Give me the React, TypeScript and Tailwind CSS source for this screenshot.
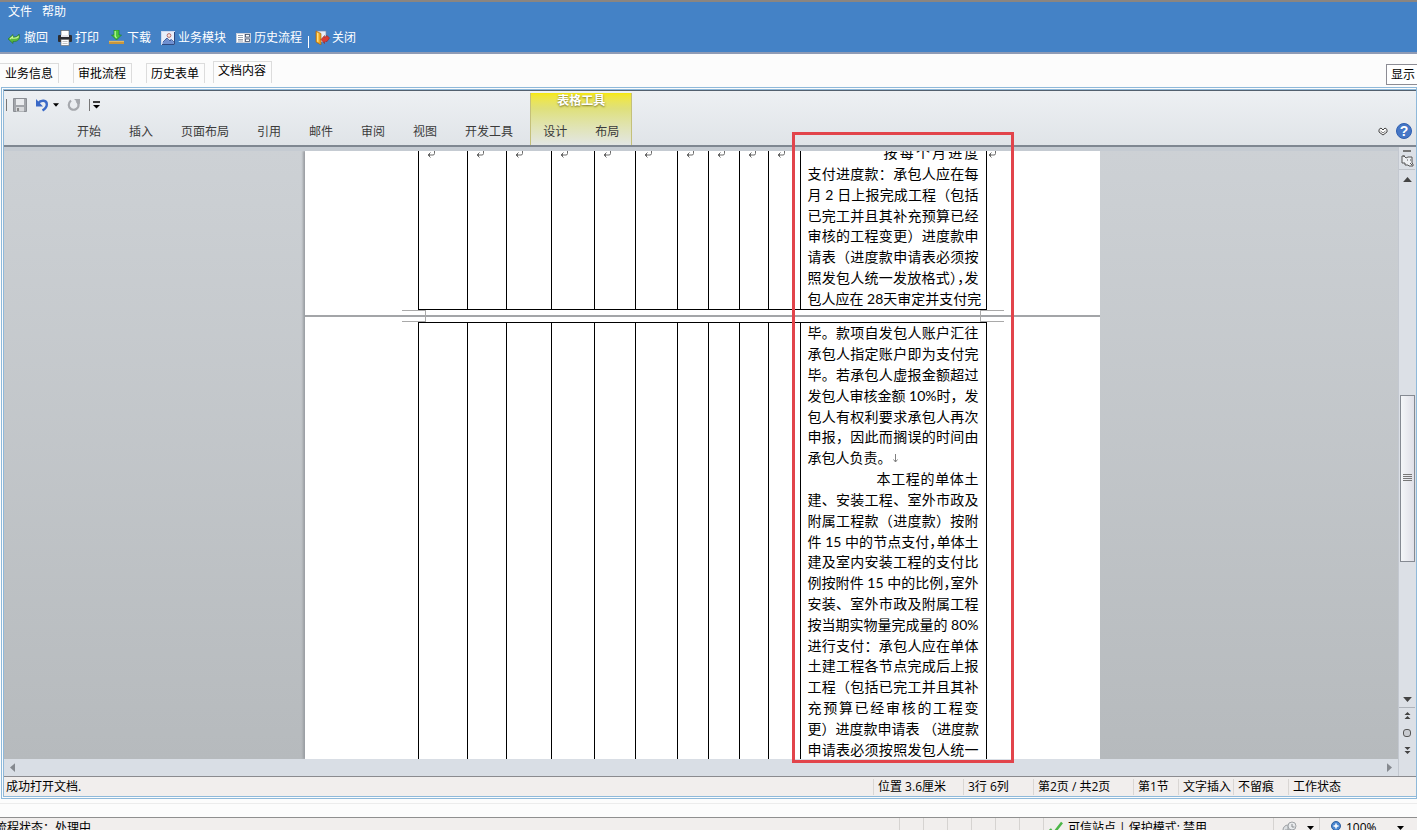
import React from 'react';
import clsx from 'clsx';

const RIBBON_TABS = ['开始', '插入', '页面布局', '引用', '邮件', '审阅', '视图', '开发工具'];
const FORM_TABS = ['业务信息', '审批流程', '历史表单', '文档内容'];

type Line = { text: string; kind?: 'first' | 'second' | 'tight' | 'end' };

const PAGE_ONE: Line[] = [
  { text: '按每个月进度', kind: 'first' },
  { text: '支付进度款：承包人应在每' },
  { text: '月 2 日上报完成工程（包括' },
  { text: '已完工并且其补充预算已经' },
  { text: '审核的工程变更）进度款申' },
  { text: '请表（进度款申请表必须按' },
  { text: '照发包人统一发放格式），发', kind: 'tight' },
  { text: '包人应在 28天审定并支付完' },
];

const PAGE_TWO: Line[] = [
  { text: '毕。款项自发包人账户汇往' },
  { text: '承包人指定账户即为支付完' },
  { text: '毕。若承包人虚报金额超过' },
  { text: '发包人审核金额 10%时，发' },
  { text: '包人有权利要求承包人再次' },
  { text: '申报，因此而搁误的时间由' },
  { text: '承包人负责。', kind: 'end' },
  { text: '本工程的单体土', kind: 'second' },
  { text: '建、安装工程、室外市政及' },
  { text: '附属工程款（进度款）按附' },
  { text: '件 15 中的节点支付，单体土', kind: 'tight' },
  { text: '建及室内安装工程的支付比' },
  { text: '例按附件 15 中的比例，室外', kind: 'tight' },
  { text: '安装、室外市政及附属工程' },
  { text: '按当期实物量完成量的 80%' },
  { text: '进行支付：承包人应在单体' },
  { text: '土建工程各节点完成后上报' },
  { text: '工程（包括已完工并且其补' },
  { text: '充预算已经审核的工程变' },
  { text: '更）进度款申请表 （进度款' },
  { text: '申请表必须按照发包人统一' },
];

const UndoGreen = () => (
  <svg width="14" height="14" viewBox="0 0 14 14">
    <path d="M1 8 6 3.500v2.300c3 .4 5-.8 6-2.800C14 7.500 11 11 6 10.500v2z" fill="#58b83c" stroke="#26702a" strokeWidth=".6" />
    <path d="M3 8 5.500 5.900v1.200c2.500.4 4.500 0 6.200-1.600" fill="none" stroke="#c9f59a" strokeWidth="1.200" />
  </svg>
);

const PrinterIcon = () => (
  <svg width="14" height="16" viewBox="0 0 14 16">
    <rect x="3" y=".5" width="8" height="5" fill="#fff" stroke="#555" strokeWidth=".6" />
    <rect x="0" y="5" width="14" height="7" rx="1" fill="#2c2c30" />
    <rect x="3" y="5" width="8" height="2" fill="#e6e6ea" />
    <rect x="3" y="9.500" width="8" height="6" fill="#fff" stroke="#666" strokeWidth=".6" />
    <path d="M4.500 11.500h5M4.500 13.500h5" stroke="#9a9a9a" strokeWidth=".6" />
  </svg>
);

const DownloadIcon = () => (
  <svg width="15" height="15" viewBox="0 0 15 15">
    <path d="M5 0h5v5h2.500l-5 5-5-5H5z" fill="#4cc63a" stroke="#16781b" strokeWidth=".6" />
    <path d="M6.200 1v5L7.500 8" fill="none" stroke="#b8f59c" strokeWidth="1.300" />
    <rect x="0" y="11" width="15" height="3" fill="#c9963c" />
    <path d="M0 11.300h15" stroke="#f5d58a" strokeWidth=".7" />
  </svg>
);

const ModuleIcon = () => (
  <svg width="14" height="14" viewBox="0 0 14 14">
    <rect x=".5" y=".5" width="13" height="13" fill="#e8effb" stroke="#cfd9ee" />
    <path d="M13.500 1v12.500H1" fill="none" stroke="#2f4a80" />
    <circle cx="8" cy="4.500" r="1.900" fill="#f8e4dc" stroke="#a65252" strokeWidth=".8" />
    <path d="m1.500 11.500 4-4.500 2.500 2.500L9.500 8l3.500 3.500V13H1.500z" fill="#6f8fd0" />
    <path d="m2 11 4-4 3 3 1.500-1.500L13 11" fill="none" stroke="#33528f" strokeWidth=".8" />
  </svg>
);

const HistoryIcon = () => (
  <svg width="15" height="14" viewBox="0 0 15 14">
    <rect x="0" y="2" width="15" height="10" fill="#c8cfdb" />
    <rect x="1" y="3" width="7" height="8" fill="#fff" />
    <path d="M2 4.500h5M2 6.500h5M2 8.500h5M2 10h5" stroke="#7a8699" strokeWidth=".8" />
    <rect x="9.500" y="3.500" width="4" height="2.500" fill="#fff" stroke="#3e4c66" strokeWidth=".8" />
    <rect x="9.500" y="8" width="4" height="2.500" fill="#fff" stroke="#3e4c66" strokeWidth=".8" />
  </svg>
);

const CloseIcon = () => (
  <svg width="15" height="15" viewBox="0 0 15 15">
    <path d="M1 1h10v11H1z" fill="#e9eef8" stroke="#7987a8" strokeWidth=".7" />
    <path d="m1 1 5 2.500V15l-5-3z" fill="#f0a51d" stroke="#9b5c0d" strokeWidth=".6" />
    <path d="m2 2.500 1.500.8v9l-1.500-.8z" fill="#ffe083" />
    <path d="m6 9.500 3.500-4v2L12 5.500 14.500 8 12 11.500H9.500v2z" fill="#dc3b33" stroke="#8f1f1b" strokeWidth=".5" />
  </svg>
);

const TOOLS = [
  { label: '撤回', icon: UndoGreen },
  { label: '打印', icon: PrinterIcon },
  { label: '下载', icon: DownloadIcon },
  { label: '业务模块', icon: ModuleIcon },
  { label: '历史流程', icon: HistoryIcon },
];

const Caret = ({ className }: { className?: string }) => (
  <svg width="7" height="4" viewBox="0 0 7 4" className={className}>
    <path d="M0 0h7L3.500 4z" fill="currentColor" />
  </svg>
);

const ReturnMark = () => (
  <svg width="8" height="7" viewBox="0 0 8 7">
    <path d="M7.500 0v2.500q0 1.500-1.500 1.500H1M3.500 1.500 1 4l2.500 2.500M2.500 3v2" fill="none" stroke="#6b6b6b" />
  </svg>
);

const TextLine = ({ text, kind }: Line) => (
  <p
    className={clsx(
      'flex flex-1 items-center whitespace-nowrap leading-5',
      kind === 'first' && 'pl-[76px]',
      kind === 'second' && 'pl-[69px]',
      kind === 'tight' && "[font-feature-settings:'halt']"
    )}
  >
    <span className={kind === 'end' ? '' : 'w-full [text-align-last:justify]'}>{text}</span>
    {kind === 'end' && (
      <svg width="7" height="9" viewBox="0 0 7 9">
        <path d="M3.500 0v8M1.500 5.500l2 2.500 2-2.500" fill="none" stroke="#808080" />
      </svg>
    )}
  </p>
);

const Columns = () => (
  <colgroup>
    <col className="w-[49px]" />
    <col className="w-[39px]" />
    <col className="w-[45px]" />
    <col className="w-[43px]" />
    <col className="w-[41px]" />
    <col className="w-[42px]" />
    <col className="w-[31px]" />
    <col className="w-[31px]" />
    <col className="w-[29px]" />
    <col className="w-[32px]" />
    <col className="w-[186px]" />
  </colgroup>
);

const EMPTY_CELLS = Array.from({ length: 10 }, (_, i) => i);

const CropMarks = () => (
  <div className="absolute inset-x-0 top-0 flex justify-between pl-[97px] pr-24">
    <span className="h-3 w-6 border-y border-r border-[#a9a9a9]" />
    <span className="h-3 w-6 border-y border-l border-[#a9a9a9]" />
  </div>
);

const DocumentPages = () => (
  <div className="w-[795px] shrink-0 bg-white font-[Lato,'Noto_Sans_CJK_SC',sans-serif] text-[14px] text-black shadow-[-2px_0_2px_#9b9ea3]">
    <div className="flex h-[159px] pl-[113px]">
      <table className="w-[569px] shrink-0 table-fixed border-collapse">
        <Columns />
        <tbody>
          <tr>
            {EMPTY_CELLS.map((i) => (
              <td key={i} className="border border-t-0 border-black p-0 pl-2 align-top">
                <ReturnMark />
              </td>
            ))}
            <td className="border border-t-0 border-black p-0 align-top">
              <div className="flex h-[158px] flex-col justify-end overflow-hidden px-[7px]">
                <div className="flex h-[166px] shrink-0 flex-col">
                  {PAGE_ONE.map((line) => (
                    <TextLine key={line.text} {...line} />
                  ))}
                </div>
              </div>
            </td>
          </tr>
        </tbody>
      </table>
      <div className="pl-px">
        <ReturnMark />
      </div>
    </div>
    <div className="relative flex h-3 items-center">
      <CropMarks />
      <div className="h-[2px] w-full bg-[#a3a5a8]" />
    </div>
    <table className="ml-[113px] w-[569px] table-fixed border-collapse">
      <Columns />
      <tbody>
        <tr>
          {EMPTY_CELLS.map((i) => (
            <td key={i} className="border border-b-0 border-black p-0" />
          ))}
          <td className="border border-b-0 border-black p-0 px-[7px]">
            <div className="flex h-[437px] flex-col">
              {PAGE_TWO.map((line) => (
                <TextLine key={line.text} {...line} />
              ))}
            </div>
          </td>
        </tr>
      </tbody>
    </table>
  </div>
);

const VerticalScrollbar = () => (
  <div className="flex w-[18px] shrink-0 flex-col items-center border-l border-[#c3c8d0] bg-[#dce0e6] pr-px text-[#444]">
    <div className="mt-[3px] h-[2px] w-2 shrink-0 bg-[#777]" />
    <button type="button" aria-label="标尺" className="flex h-[18px] w-full items-center justify-center border-b border-[#c0c4ca]">
      <svg width="13" height="13" viewBox="0 0 13 13">
        <path d="M1 2h2l2 2 2-1h4v6l1 1v2H8l-1-1H4V9H1z" fill="#eef0f3" stroke="#555" />
        <path d="M3 1v2M6 6h1M9 6h1M9 9l2 2" stroke="#555" />
      </svg>
    </button>
    <button type="button" aria-label="向上滚动" className="flex h-[18px] items-center justify-center">
      <Caret className="h-[5px] w-[9px] rotate-180" />
    </button>
    <div className="grow-[208] basis-0" />
    <div className="flex w-[15px] grow-[165] basis-0 items-center justify-center border border-[#858a92] bg-linear-to-r from-[#f4f6f8] to-[#e0e0e8]">
      <svg width="9" height="8" viewBox="0 0 9 8">
        <path d="M0 .5h9M0 2.500h9M0 4.500h9M0 6.500h9" stroke="#777" />
      </svg>
    </div>
    <div className="grow-[131] basis-0" />
    <button type="button" aria-label="向下滚动" className="flex h-4 w-full items-center justify-center border-b border-[#aeb3ba]">
      <Caret className="h-[5px] w-[9px]" />
    </button>
    <div className="flex h-[68px] flex-col items-center gap-[9px] pt-1">
      <button type="button" aria-label="上一页">
        <svg width="7" height="8" viewBox="0 0 7 8" className="block">
          <path d="M3.500 0 6.500 3h-6zM3.500 4 6.500 7h-6z" fill="#444" />
        </svg>
      </button>
      <button type="button" aria-label="选择浏览对象">
        <svg width="8" height="8" viewBox="0 0 8 8" className="block">
          <rect x=".5" y=".5" width="7" height="7" rx="2.500" fill="#c8cbd0" stroke="#555" />
        </svg>
      </button>
      <button type="button" aria-label="下一页">
        <svg width="7" height="8" viewBox="0 0 7 8" className="block">
          <path d="M3.500 4 6.500 1h-6zM3.500 8 6.500 5h-6z" fill="#444" />
        </svg>
      </button>
    </div>
  </div>
);

const Ribbon = () => (
  <div className="flex h-[57px] shrink-0 border-t border-b-2 border-t-[#52606e] border-b-[#7f8791] bg-linear-to-b from-[#edf0f3] to-[#e0e4e8] text-[#3b3b3b]">
    <div className="flex flex-col">
      <div className="flex h-[27px] items-center pl-[2px]">
        <span className="h-3 w-px bg-[#777]" />
        <button type="button" aria-label="保存" className="ml-[6px]">
          <svg width="14" height="14" viewBox="0 0 14 14">
            <path d="M.5.5h13v13H.5z" fill="#a3a6ab" stroke="#8b8e94" />
            <rect x="3" y="1" width="8" height="6" fill="#e9ebee" />
            <rect x="3" y="9" width="8" height="4.500" fill="#d7d9dc" />
            <rect x="4" y="10" width="2" height="3" fill="#888" />
          </svg>
        </button>
        <button type="button" aria-label="撤消" className="ml-2">
          <svg width="14" height="14" viewBox="0 0 14 14">
            <path d="M3 5.500C6 1.500 12 2 11.800 6.500c0 2.500-1.800 4.500-4.300 6" fill="none" stroke="#3a69c7" strokeWidth="2.400" />
            <path d="M1 1v7.500h7z" fill="#3a69c7" />
          </svg>
        </button>
        <Caret className="ml-1 w-[6px] text-black" />
        <button type="button" aria-label="恢复" className="ml-2">
          <svg width="14" height="14" viewBox="0 0 14 14">
            <path d="M4 2.500C1 5 1 9 4 11c3.500 2 8-.5 7.500-4.500C11.300 5 10.500 4 9.500 3" fill="none" stroke="#a5a8ad" strokeWidth="2.200" />
            <path d="M7 1h6v5.500z" fill="#a5a8ad" />
          </svg>
        </button>
        <span className="ml-2 h-3 w-px bg-[#777]" />
        <button type="button" aria-label="自定义快速访问工具栏" className="ml-[3px]">
          <svg width="7" height="8" viewBox="0 0 7 8">
            <path d="M0 1h7" stroke="#000" strokeWidth="1.500" />
            <path d="M0 4h7L3.500 7.500z" fill="#000" />
          </svg>
        </button>
      </div>
      <div className="flex h-[27px] items-center gap-7 pl-[73px] pr-[17px]">
        {RIBBON_TABS.map((tab) => (
          <button key={tab} type="button">
            {tab}
          </button>
        ))}
      </div>
    </div>
    <div className="mt-[2px] flex flex-col border-x border-[#c4c07a] bg-linear-to-b from-[#f5e800] via-[#dfe07a] via-30% to-[#e3e6e4]">
      <div className="h-[25px] text-center leading-4 font-bold text-white [text-shadow:0_1px_2px_#77732a]">表格工具</div>
      <div className="flex h-[27px] items-center gap-7 px-3">
        <button type="button">设计</button>
        <button type="button">布局</button>
      </div>
    </div>
    <div className="ml-auto flex items-end gap-2 pr-1 pb-[6px]">
      <button type="button" aria-label="展开功能区">
        <svg width="10" height="14" viewBox="0 0 10 14">
          <path d="M1 4.500 3 3l2 2 2-2 2 1.500V7l-4 3-4-3z" fill="#fff" stroke="#444" />
          <path d="m2.500 6 2.500 2L7.500 6" fill="none" stroke="#777" />
        </svg>
      </button>
      <button type="button" aria-label="帮助" className="flex size-4 items-center justify-center rounded-full border border-[#2f5fb0] bg-[#4677c6] font-['Liberation_Sans',sans-serif] text-[14px] leading-4 font-bold text-white">
        ?
      </button>
    </div>
  </div>
);

const OfficeStatus = () => (
  <div className="flex h-5 shrink-0 items-center border-t border-[#8b8b8f] bg-[#f1eeed] whitespace-nowrap text-black">
    <span className="flex-1 pl-[2px]">成功打开文档.</span>
    <span className="w-[90px] border-l border-[#d9d6d4] pl-1">位置 3.6厘米</span>
    <span className="w-[70px] border-l border-[#d9d6d4] pl-1">3行 6列</span>
    <span className="w-[100px] border-l border-[#d9d6d4] pl-1">第2页 / 共2页</span>
    <span className="w-[45px] border-l border-[#d9d6d4] pl-1">第1节</span>
    <span className="w-[55px] border-l border-[#d9d6d4] pl-1">文字插入</span>
    <span className="w-[55px] border-l border-[#d9d6d4] pl-1">不留痕</span>
    <span className="w-32 border-l border-[#d9d6d4] pl-1">工作状态</span>
  </div>
);

const BrowserStatus = () => (
  <div className="flex h-[13px] shrink-0 items-start overflow-hidden border-t border-[#8f8f8f] bg-[#f1eeed] leading-5 whitespace-nowrap text-black">
    <span className="-ml-[5px] flex-1">流程状态：处理中</span>
    {[1, 2, 3, 4, 5, 6].map((n) => (
      <span key={n} className="h-5 w-6 border-l border-[#d6d3d1]" />
    ))}
    <div className="flex h-5 w-[230px] items-center border-l border-[#d6d3d1] pl-[5px]">
      <svg width="14" height="14" viewBox="0 0 14 14">
        <path d="m1 8 3.500 4.500L13 1.500" fill="none" stroke="#4cb648" strokeWidth="2.500" />
      </svg>
      <span className="ml-[5px]">可信站点 | 保护模式: 禁用</span>
    </div>
    <div className="flex h-5 w-[46px] items-center border-l border-[#d6d3d1] pl-2">
      <svg width="15" height="15" viewBox="0 0 15 15">
        <circle cx="6" cy="9" r="5" fill="#dcdfe2" stroke="#9a9da1" />
        <path d="M3 9h6M6 5v8" stroke="#9a9da1" />
        <circle cx="10" cy="5" r="4" fill="#e8eaec" stroke="#a0a3a7" />
        <path d="M10 3v3h2.500" fill="none" stroke="#8a8d91" />
      </svg>
      <Caret className="ml-[10px]" />
    </div>
    <button type="button" className="flex h-5 w-[98px] items-center border-l border-[#d6d3d1] pl-[10px]">
      <svg width="12" height="14" viewBox="0 0 12 14">
        <path d="M6 8v6" stroke="#8a8d91" strokeWidth="2" />
        <circle cx="6" cy="5" r="4.500" fill="#4a86d0" stroke="#2d5f9f" />
        <path d="M6 2.500v5M3.500 5h5" stroke="#fff" strokeWidth="1.500" />
      </svg>
      <span className="ml-1">100%</span>
      <Caret className="ml-5" />
    </button>
  </div>
);

export default function App() {
  return (
    <div className="flex h-screen flex-col overflow-hidden bg-[#fcfcfc] font-['Open_Sans','Noto_Sans_CJK_SC',sans-serif] text-[12px] leading-4">
      {/* Menu and toolbar */}
      <header className="shrink-0 border-t-2 border-b-2 border-t-[#8b8580] border-b-[#8f9bb5] bg-[#4482c6] text-white">
        <nav className="flex h-[19px] items-center gap-[10px] pl-2">
          <button type="button">文件</button>
          <button type="button">帮助</button>
        </nav>
        <div className="flex h-[31px] items-center gap-[10px] pt-[2px] pl-[7px]">
          {TOOLS.map(({ label, icon: Icon }) => (
            <button key={label} type="button" className="flex items-center gap-[3px]">
              <Icon />
              {label}
            </button>
          ))}
          <span className="-mx-1 mt-2 h-3 w-px bg-white" />
          <button type="button" className="flex items-center gap-[2px]">
            <CloseIcon />
            关闭
          </button>
        </div>
      </header>

      {/* Form tabs */}
      <div className="flex h-[33px] shrink-0 items-end">
        <div role="tablist" className="flex items-end gap-[14px] pb-1 text-black">
          {FORM_TABS.map((tab, i) => {
            const active = i === FORM_TABS.length - 1;
            return (
              <button
                key={tab}
                type="button"
                role="tab"
                aria-selected={active}
                className={clsx(
                  'border-t border-r border-[#dcdcdc] pr-[5px]',
                  i === 0 ? 'pl-[5px]' : 'border-l pl-1',
                  active ? '-ml-[6px] h-[22px] pb-1' : 'h-5'
                )}
              >
                {tab}
              </button>
            );
          })}
        </div>
        <button type="button" className="mb-[2px] ml-auto h-[21px] border border-r-0 border-[#8c8c94] bg-white pl-1 pr-[2px] text-black">
          显示
        </button>
      </div>

      {/* Embedded editor */}
      <section className="ml-px flex min-h-0 flex-1 flex-col border-[3px] border-r border-double border-[#8fb9da]">
        <Ribbon />
        <div className="flex min-h-0 flex-1">
          <div className="flex min-w-0 flex-1 flex-col">
            <div className="h-1 shrink-0 bg-[#c5cbd2]" />
            <div className="relative min-h-0 flex-1">
              <div className="flex h-full justify-center overflow-hidden bg-linear-to-b from-[#cdd1d5] to-[#b6babd] pl-[2px]">
                <DocumentPages />
              </div>
              <div className="pointer-events-none absolute -top-[19px] -bottom-1 left-1/2 ml-[91px] w-[222px] border-[3px] border-[#e2444b]" />
            </div>
            <div className="flex h-[17px] shrink-0 items-center justify-between bg-[#d9dee5] px-1 text-[#85898f]">
              <button type="button" aria-label="向左滚动">
                <Caret className="h-[5px] w-[9px] rotate-90" />
              </button>
              <button type="button" aria-label="向右滚动">
                <Caret className="h-[5px] w-[9px] -rotate-90" />
              </button>
            </div>
          </div>
          <VerticalScrollbar />
        </div>
        <OfficeStatus />
      </section>

      <div className="mt-1 h-[14px] shrink-0 border-t border-[#ececec]" />
      <BrowserStatus />
    </div>
  );
}
